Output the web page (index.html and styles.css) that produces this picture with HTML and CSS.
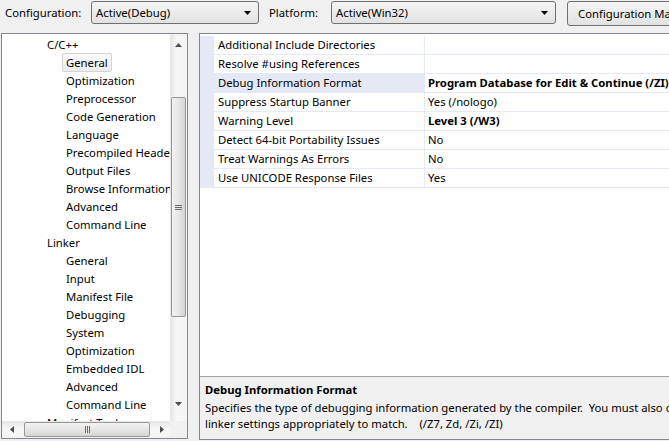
FILE: index.html
```html
<!DOCTYPE html>
<html>
<head>
<meta charset="utf-8">
<link rel="stylesheet" href="styles.css">
</head>
<body>
<div class="toolbar">
  <span class="lbl lbl-config">Configuration:</span>
  <div class="combo combo-config"><span>Active(Debug)</span><svg class="drop" width="7" height="4" viewBox="0 0 7 4"><path d="M0 0H7L3.5 4Z" fill="#000"/></svg></div>
  <span class="lbl lbl-platform">Platform:</span>
  <div class="combo combo-platform"><span>Active(Win32)</span><svg class="drop" width="7" height="4" viewBox="0 0 7 4"><path d="M0 0H7L3.5 4Z" fill="#000"/></svg></div>
  <div class="btn">Configuration Manager...</div>
</div>
<div class="main">
  <div class="tree-panel">
    <div class="tree">
      <div class="row l1">C/C++</div>
      <div class="row l2"><span class="sel">General</span></div>
      <div class="row l2">Optimization</div>
      <div class="row l2">Preprocessor</div>
      <div class="row l2">Code Generation</div>
      <div class="row l2">Language</div>
      <div class="row l2">Precompiled Headers</div>
      <div class="row l2">Output Files</div>
      <div class="row l2">Browse Information</div>
      <div class="row l2">Advanced</div>
      <div class="row l2">Command Line</div>
      <div class="row l1">Linker</div>
      <div class="row l2">General</div>
      <div class="row l2">Input</div>
      <div class="row l2">Manifest File</div>
      <div class="row l2">Debugging</div>
      <div class="row l2">System</div>
      <div class="row l2">Optimization</div>
      <div class="row l2">Embedded IDL</div>
      <div class="row l2">Advanced</div>
      <div class="row l2">Command Line</div>
      <div class="row l1">Manifest Tool</div>
    </div>
    <div class="vscroll">
      <svg class="arrow-up" width="7" height="4" viewBox="0 0 7 4"><path d="M3.5 0L7 4H0Z" fill="#4d4d4d"/></svg>
      <div class="vthumb">
        <svg width="7" height="5" viewBox="0 0 7 5"><path d="M0 .5H7M0 2.5H7M0 4.5H7" stroke="#6a6a6a" stroke-width="1"/></svg>
      </div>
      <svg class="arrow-down" width="7" height="4" viewBox="0 0 7 4"><path d="M0 0H7L3.5 4Z" fill="#4d4d4d"/></svg>
    </div>
    <div class="hscroll">
      <svg class="arrow-left" width="4" height="7" viewBox="0 0 4 7"><path d="M0 3.5L4 0V7Z" fill="#4d4d4d"/></svg>
      <div class="hthumb">
        <svg width="5" height="7" viewBox="0 0 5 7"><path d="M.5 0V7M2.5 0V7M4.5 0V7" stroke="#6a6a6a" stroke-width="1"/></svg>
      </div>
      <svg class="arrow-right" width="4" height="7" viewBox="0 0 4 7"><path d="M4 3.5L0 0V7Z" fill="#4d4d4d"/></svg>
    </div>
    <div class="corner"></div>
  </div>
  <div class="prop-panel">
    <div class="grid">
      <div class="prow"><div class="margin"></div><div class="name">Additional Include Directories</div><div class="value"></div></div>
      <div class="prow"><div class="margin"></div><div class="name">Resolve #using References</div><div class="value"></div></div>
      <div class="prow selected"><div class="margin"></div><div class="name">Debug Information Format</div><div class="value bold">Program Database for Edit &amp; Continue (/ZI)</div></div>
      <div class="prow"><div class="margin"></div><div class="name">Suppress Startup Banner</div><div class="value">Yes (/nologo)</div></div>
      <div class="prow"><div class="margin"></div><div class="name">Warning Level</div><div class="value bold">Level 3 (/W3)</div></div>
      <div class="prow"><div class="margin"></div><div class="name">Detect 64-bit Portability Issues</div><div class="value">No</div></div>
      <div class="prow"><div class="margin"></div><div class="name">Treat Warnings As Errors</div><div class="value">No</div></div>
      <div class="prow"><div class="margin"></div><div class="name">Use UNICODE Response Files</div><div class="value">Yes</div></div>
    </div>
    <div class="desc">
      <div class="desc-title">Debug Information Format</div>
      <div class="desc-text">Specifies the type of debugging information generated by the compiler.&nbsp; You must also configure<br>linker settings appropriately to match.&nbsp;&nbsp;&nbsp; (/Z7, Zd, /Zi, /ZI)</div>
    </div>
  </div>
</div>
</body>
</html>
```
FILE: styles.css
```css
* { box-sizing: border-box; }
html, body { margin: 0; padding: 0; }
body {
  width: 669px;
  height: 441px;
  overflow: hidden;
  background: #f0f0f0;
  font-family: "Noto Sans", "DejaVu Sans", sans-serif;
  font-size: 11.3px;
  color: #000;
}
.toolbar {
  display: flex;
  align-items: flex-start;
  height: 33px;
  padding-top: 1px;
  padding-left: 5px;
  white-space: nowrap;
}
.toolbar > * { flex: none; }
.lbl { line-height: 23px; }
.lbl-config { width: 86px; }
.lbl-platform { width: 62px; margin-left: 10px; }
.combo {
  height: 23px;
  border: 1px solid #707070;
  border-radius: 3px;
  background: linear-gradient(#f4f4f4, #e2e2e2);
  padding-left: 4px;
  line-height: 21px;
  display: flex;
  align-items: center;
  justify-content: space-between;
  padding-right: 7px;
}
.combo-config { width: 168px; }
.combo-platform { width: 225px; }
.btn {
  margin-left: 11px;
  height: 25px;
  width: 130px;
  border: 1px solid #707070;
  border-radius: 3px;
  background: linear-gradient(#f4f4f4, #e2e2e2);
  padding-left: 10px;
  line-height: 23px;
  overflow: hidden;
}
.main {
  display: flex;
  padding-left: 1px;
  gap: 11px;
}
.main > * { flex: none; }
.tree-panel {
  width: 187px;
  height: 406px;
  border: 1px solid #828790;
  background: #fff;
  display: grid;
  grid-template-columns: 168px 17px;
  grid-template-rows: 387px 17px;
}
.tree {
  overflow: hidden;
  padding-top: 2px;
  white-space: nowrap;
}
.row {
  height: 18px;
  line-height: 18px;
}
.l1 { padding-left: 45px; }
.l2 { padding-left: 64px; }
.sel {
  display: inline-block;
  height: 19px;
  margin-top: -1px;
  margin-left: -4px;
  padding: 0 3px;
  border: 1px solid #d4d4d4;
  border-radius: 2px;
  background: linear-gradient(#fbfbfb, #ececec);
  line-height: 17px;
}
.vscroll {
  background: linear-gradient(to right, #e6e6e6, #f7f7f7 40%, #f3f3f3);
  display: flex;
  flex-direction: column;
  align-items: center;
  padding-top: 9px;
}
.arrow-up { display: block; }
.vthumb {
  margin-top: 50px;
  width: 15px;
  height: 220px;
  border: 1px solid #979797;
  border-radius: 2px;
  background: linear-gradient(to right, #f3f3f3, #e6e6e6 50%, #d5d5d5);
  display: flex;
  align-items: center;
  justify-content: center;
}
.arrow-down { display: block; margin-top: 85px; }
.hscroll {
  background: linear-gradient(#e6e6e6, #f7f7f7 40%, #f3f3f3);
  display: flex;
  align-items: center;
  padding-left: 8px;
}
.hthumb {
  margin-left: 10px;
  width: 126px;
  height: 15px;
  border: 1px solid #979797;
  border-radius: 2px;
  background: linear-gradient(#f3f3f3, #e6e6e6 50%, #d5d5d5);
  display: flex;
  align-items: center;
  justify-content: center;
}
.arrow-right { margin-left: 10px; }
.corner { background: #f0f0f0; }
.prop-panel {
  width: 520px;
  height: 407px;
  border: 1px solid #828790;
  display: flex;
  flex-direction: column;
}
.grid {
  height: 343px;
  background: #fff;
  padding-top: 2px;
  border-bottom: 1px solid #a0a0a0;
  flex: none;
}
.prow {
  display: flex;
  height: 19px;
  line-height: 18px;
  white-space: nowrap;
}
.margin {
  width: 14px;
  background: #e4e9f5;
}
.name {
  width: 211px;
  padding-left: 4px;
  border-right: 1px solid #e4e9f5;
  border-bottom: 1px solid #e4e9f5;
}
.value {
  flex: 1;
  padding-left: 3px;
  border-bottom: 1px solid #e4e9f5;
}
.selected .name { background: #e4e9f5; }
.bold { font-weight: bold; }
.desc {
  flex: 1;
  background: #f0f0f0;
  padding: 5px 0 0 5px;
  white-space: nowrap;
  overflow: hidden;
}
.desc-title {
  font-weight: bold;
  line-height: 16px;
  margin-bottom: 2px;
}
.desc-text { line-height: 16px; }
```
